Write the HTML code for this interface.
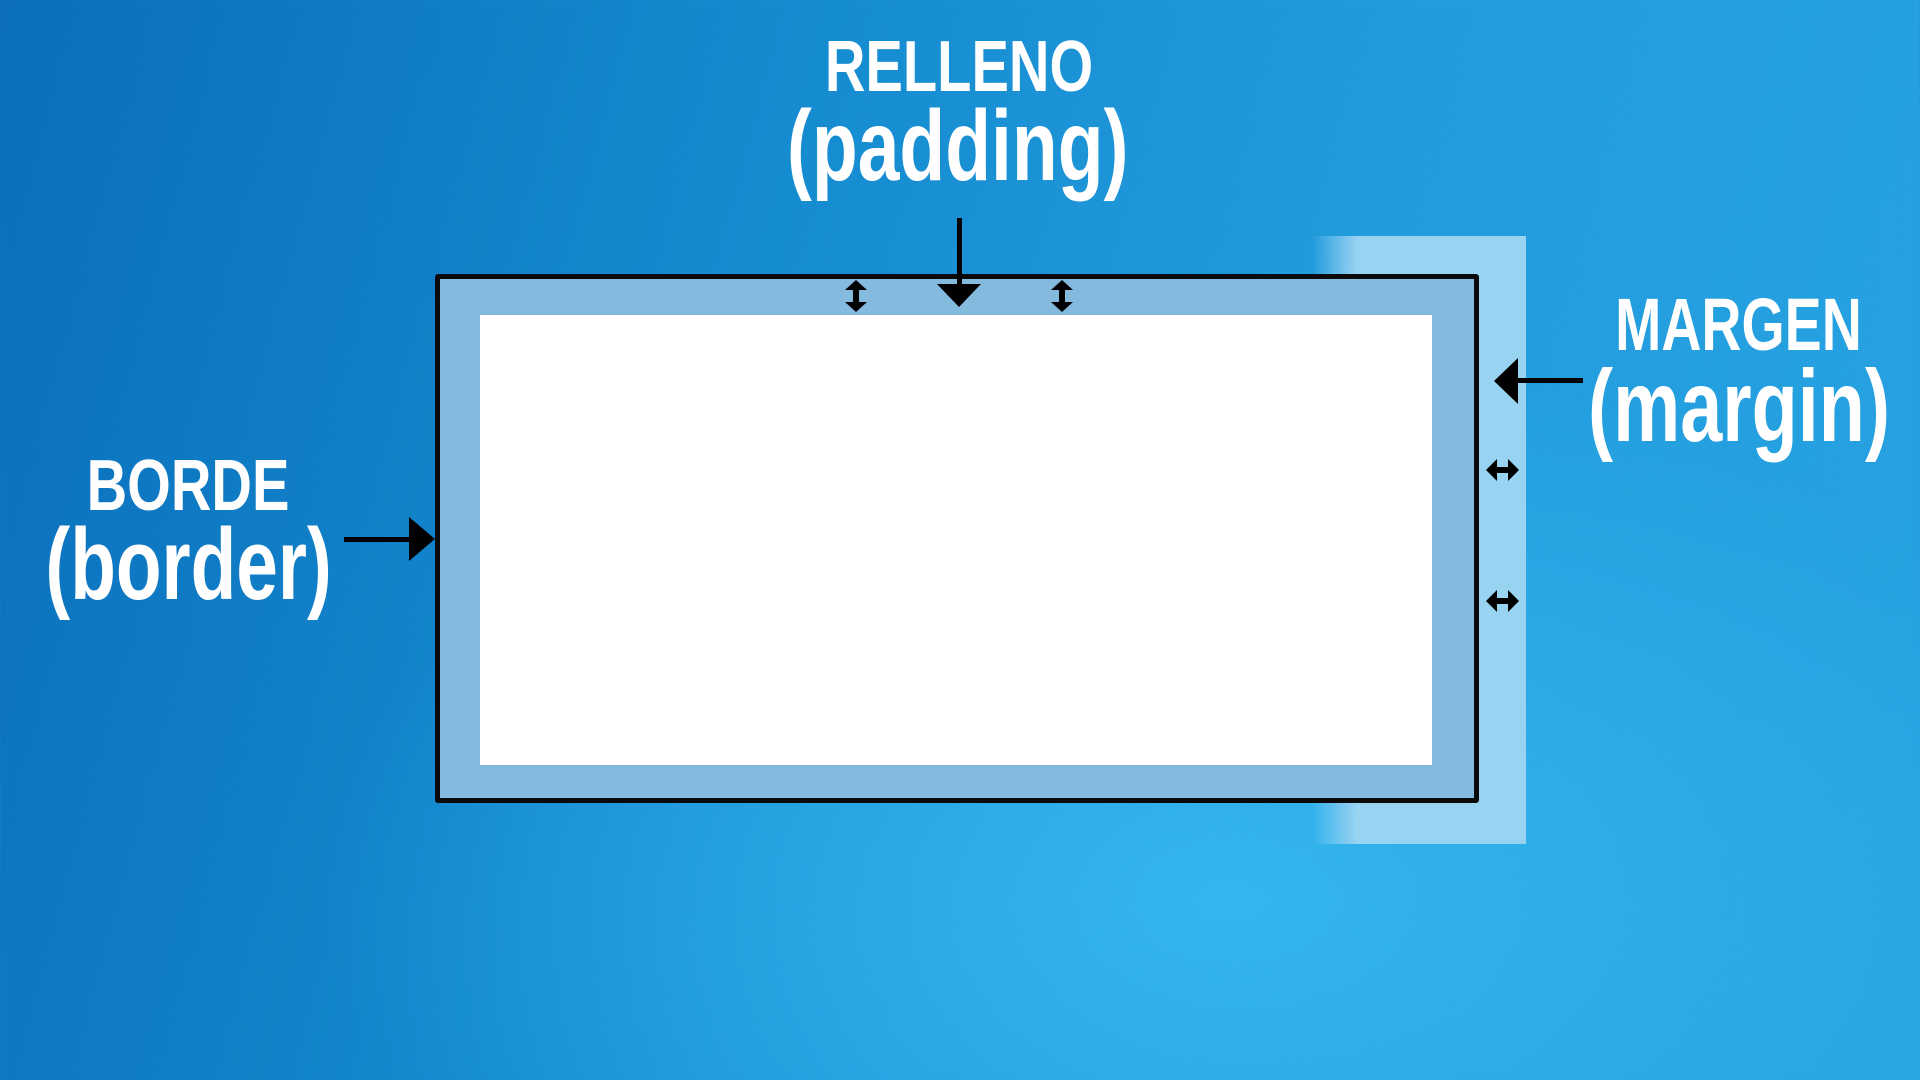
<!DOCTYPE html>
<html><head><meta charset="utf-8"><style>
html,body{margin:0;padding:0}
body{width:1920px;height:1080px;position:relative;overflow:hidden;
background:radial-gradient(ellipse 900px 550px at 1230px 900px,rgba(52,182,239,1) 0%,rgba(52,182,239,.6) 40%,rgba(52,182,239,0) 100%),linear-gradient(105deg,#0a6ebb 0%,#158acf 35%,#229cdd 65%,#27a2e1 100%);
font-family:"Liberation Sans",sans-serif;font-weight:bold;color:#fff}
.t{position:absolute;width:700px;text-align:center;line-height:1;white-space:nowrap}
.t span{display:inline-block}
.abs{position:absolute}
</style></head><body>
<div class="abs" style="left:1312px;top:236px;width:214px;height:608px;background:linear-gradient(90deg,rgba(153,211,242,0) 0px,#99d3f2 45px,#99d3f2 100%)"></div>
<div class="abs" style="left:435px;top:274px;width:1034px;height:519px;border:5px solid #0a0a0a;border-radius:3px;background:#85badf"></div>
<div class="abs" style="left:480px;top:315px;width:952px;height:450px;background:#fff"></div>

<div class="t" style="left:609px;top:31px;font-size:72px"><span style="transform:scaleX(.78)">RELLENO</span></div>
<div class="t" style="left:608px;top:96px;font-size:100px"><span style="transform:scaleX(.75)">(padding)</span></div>
<div class="t" style="left:1388px;top:288px;font-size:74px"><span style="transform:scaleX(.75)">MARGEN</span></div>
<div class="t" style="left:1389px;top:355px;font-size:102px"><span style="transform:scaleX(.74)">(margin)</span></div>
<div class="t" style="left:-162px;top:450px;font-size:72px"><span style="transform:scaleX(.78)">BORDE</span></div>
<div class="t" style="left:-161px;top:515px;font-size:101px"><span style="transform:scaleX(.74)">(border)</span></div>

<svg class="abs" style="left:0;top:0" width="1920" height="1080">
<g fill="#000">
<rect x="957" y="218" width="5" height="72"/>
<polygon points="937,284 981,284 959,307"/>
<rect x="344" y="537" width="66" height="5"/>
<polygon points="409,517 409,561 435,539"/>
<rect x="1516" y="378" width="67" height="5"/>
<polygon points="1518,358 1518,404 1494,381"/>
<g id="v"><polygon points="856,280 845,290 867,290"/><rect x="853" y="289" width="6" height="14"/><polygon points="856,312 845,302 867,302"/></g>
<use href="#v" transform="translate(206,0)"/>
<g id="h"><polygon points="1486,470 1497,459 1497,481"/><rect x="1496" y="467" width="13" height="6"/><polygon points="1519,470 1508,459 1508,481"/></g>
<use href="#h" transform="translate(0,131)"/>
</g>
</svg>
</body></html>
